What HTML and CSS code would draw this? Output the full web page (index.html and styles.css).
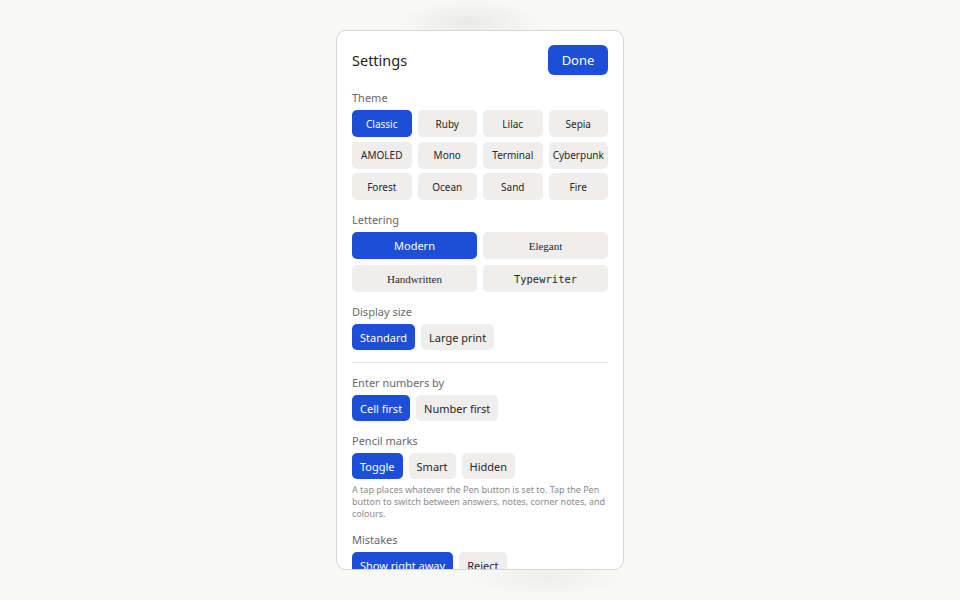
FILE: index.html
```html
<!DOCTYPE html>
<html lang="en">
<head>
  <meta charset="UTF-8" />
  <meta name="viewport" content="width=device-width, initial-scale=1">
  <title>Settings</title>
  <link rel="stylesheet" href="styles.css">
</head>
<body>
  <div class="backdrop">
    <section class="panel">
      <header class="panel-head">
        <h2>Settings</h2>
        <button type="button" class="done">Done</button>
      </header>

      <div class="group">
        <div class="group-label">Theme</div>
        <div class="choices themes">
          <button type="button" class="opt on">Classic</button>
          <button type="button" class="opt">Ruby</button>
          <button type="button" class="opt">Lilac</button>
          <button type="button" class="opt">Sepia</button>
          <button type="button" class="opt">AMOLED</button>
          <button type="button" class="opt">Mono</button>
          <button type="button" class="opt">Terminal</button>
          <button type="button" class="opt">Cyberpunk</button>
          <button type="button" class="opt">Forest</button>
          <button type="button" class="opt">Ocean</button>
          <button type="button" class="opt">Sand</button>
          <button type="button" class="opt">Fire</button>
        </div>
      </div>

      <div class="group">
        <div class="group-label">Lettering</div>
        <div class="choices letters">
          <button type="button" class="opt on">Modern</button>
          <button type="button" class="opt serif">Elegant</button>
          <button type="button" class="opt serif">Handwritten</button>
          <button type="button" class="opt mono">Typewriter</button>
        </div>
      </div>

      <div class="group">
        <div class="group-label">Display size</div>
        <div class="choices row">
          <button type="button" class="opt on">Standard</button>
          <button type="button" class="opt">Large print</button>
        </div>
      </div>

      <hr class="divider">

      <div class="group">
        <div class="group-label">Enter numbers by</div>
        <div class="choices row">
          <button type="button" class="opt on">Cell first</button>
          <button type="button" class="opt">Number first</button>
        </div>
      </div>

      <div class="group">
        <div class="group-label">Pencil marks</div>
        <div class="choices row">
          <button type="button" class="opt on">Toggle</button>
          <button type="button" class="opt">Smart</button>
          <button type="button" class="opt">Hidden</button>
        </div>
        <p class="hint">A tap places whatever the Pen button is set to. Tap the Pen button to switch between answers, notes, corner notes, and colours.</p>
      </div>

      <div class="group">
        <div class="group-label">Mistakes</div>
        <div class="choices row">
          <button type="button" class="opt on">Show right away</button>
          <button type="button" class="opt">Reject</button>
        </div>
      </div>
    </section>
  </div>
</body>
</html>
```

FILE: styles.css
```css
/* Light sheet over a softly blurred board */
body {
  margin: 0;
  font-family: "Noto Sans", "Open Sans", sans-serif;
  color: #1f2126;
  background:
    radial-gradient(ellipse 70px 22px at 470px 22px, rgba(0,0,0,0.06), transparent),
    radial-gradient(ellipse 80px 18px at 545px 578px, rgba(0,0,0,0.04), transparent),
    #f8f8f6;
  min-height: 100vh;
}
.backdrop {
  padding-top: 30px;
}
.panel {
  box-sizing: border-box;
  width: 288px;
  height: 540px;
  margin: 0 auto;
  padding: 14px 15px;
  background: #fff;
  border: 1px solid #d5d5d3;
  border-radius: 10px;
  overflow: hidden;
}
.panel-head {
  display: flex;
  align-items: center;
  justify-content: space-between;
  margin-bottom: 15px;
}
.panel-head h2 {
  margin: 0;
  font-size: 14.5px;
  font-weight: 400;
}
.done {
  width: 60px;
  height: 30px;
  border: none;
  border-radius: 6px;
  background: #1d4ed8;
  color: #fff;
  font: 400 13px "Noto Sans", sans-serif;
  cursor: pointer;
}
.group {
  margin-bottom: 12px;
}
.group-label {
  font-size: 11px;
  line-height: 15px;
  color: #67676b;
  margin-bottom: 5px;
}
.choices {
  display: grid;
  gap: 6px;
}
.themes {
  grid-template-columns: repeat(4, 1fr);
  row-gap: 4.5px;
}
.letters {
  grid-template-columns: 1fr 1fr;
}
.choices.row {
  display: flex;
}
.opt {
  height: 27px;
  padding: 0 8px;
  border: none;
  border-radius: 5px;
  background: #efeeec;
  color: #26272b;
  font: 400 11px "Noto Sans", sans-serif;
  cursor: pointer;
}
.themes .opt {
  font-size: 10px;
  padding: 0;
}
.row .opt {
  height: 26px;
}
.opt.on {
  background: #1d4ed8;
  color: #fff;
}
.opt.serif {
  font-family: "Liberation Serif", serif;
  font-size: 11px;
}
.opt.mono {
  font-family: "DejaVu Sans Mono", monospace;
  font-size: 10.5px;
}
.divider {
  border: none;
  border-top: 1px solid #e4e4e2;
  margin: 0 0 12px;
}
.hint {
  margin: 5px 0 0;
  font-size: 9px;
  line-height: 12px;
  color: #8b8b8f;
}
```
